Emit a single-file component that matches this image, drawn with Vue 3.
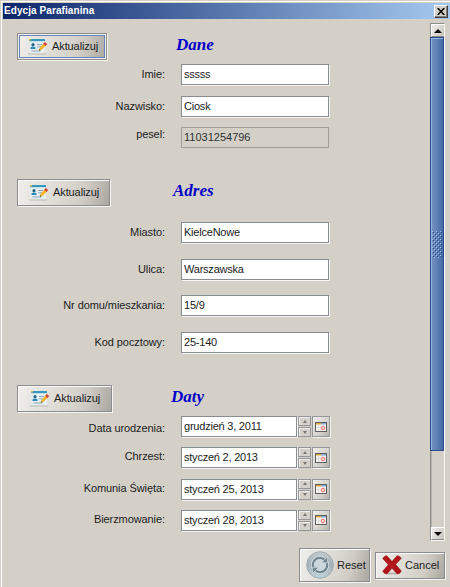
<script setup>
const sections = [
  {
    id: 'dane', title: 'Dane', focused: true,
    rows: [
      { label: 'Imie:', value: 'sssss' },
      { label: 'Nazwisko:', value: 'Ciosk' },
      { label: 'pesel:', value: '11031254796', readonly: true },
    ],
  },
  {
    id: 'adres', title: 'Adres',
    rows: [
      { label: 'Miasto:', value: 'KielceNowe' },
      { label: 'Ulica:', value: 'Warszawska' },
      { label: 'Nr domu/mieszkania:', value: '15/9' },
      { label: 'Kod pocztowy:', value: '25-140' },
    ],
  },
  {
    id: 'daty', title: 'Daty',
    rows: [
      { label: 'Data urodzenia:', value: 'grudzień 3, 2011', date: true },
      { label: 'Chrzest:', value: 'styczeń 2, 2013', date: true },
      { label: 'Komunia Święta:', value: 'styczeń 25, 2013', date: true },
      { label: 'Bierzmowanie:', value: 'styczeń 28, 2013', date: true },
    ],
  },
]
</script>

<template>
  <div class="window">
    <header class="titlebar">
      <span class="title">Edycja Parafianina</span>
      <button class="close" aria-label="Zamknij">
        <svg width="8" height="7" viewBox="0 0 8 7"><path d="M.7 0 7.3 7M7.3 0 .7 7" stroke="#000" stroke-width="1.5" /></svg>
      </button>
    </header>

    <div class="body">
      <main class="form">
        <section v-for="s in sections" :key="s.id" :class="['section', s.id]">
          <div class="head">
            <button :class="['btn', 'update', { focused: s.focused }]">
              <svg class="card" width="20" height="18" viewBox="0 0 20 18">
                <rect x="1" y="1" width="16" height="14.5" fill="#e6edf0" />
                <path d="M1 1h16v2.2H1z" fill="#3799bd" />
                <path d="M1 1h2v1.5H1z" fill="#d4bd45" />
                <path d="M0 16h18" stroke="#bcbab5" />
                <circle cx="5" cy="6.7" r="1.6" fill="#286989" />
                <path d="M2.5 11V9.6q2.5-2.2 5 0V11z" fill="#3188b1" />
                <path d="M9 6.5h5M9 8.8h4M3.5 13h9" stroke="#8daabc" />
                <path d="m10.8 12.8.8-3 4.2-4.6 2.2 2-4.3 4.6z" fill="#f4b52a" />
                <path d="m15.2 5.8 1.6-1.9 2.4 2-1.7 2z" fill="#d54136" />
                <path d="m10.8 12.8.5-1.7 1.2 1.1z" fill="#664b28" />
              </svg>
              <span>Aktualizuj</span>
            </button>
            <h2>{{ s.title }}</h2>
          </div>
          <div class="rows">
            <div v-for="r in s.rows" :key="r.label" class="row">
              <label>{{ r.label }}</label>
              <div v-if="r.date" class="datefield">
                <div class="input"><span>{{ r.value }}</span></div>
                <div class="spinner">
                  <button aria-label="Więcej"><svg width="4" height="3" viewBox="0 0 4 3"><path d="M0 3 2 0l2 3z" fill="#777" /></svg></button>
                  <button aria-label="Mniej"><svg width="4" height="3" viewBox="0 0 4 3"><path d="M0 0h4L2 3z" fill="#777" /></svg></button>
                </div>
                <button class="calendar" aria-label="Kalendarz">
                  <svg width="12" height="10" viewBox="0 0 12 10">
                    <rect x=".5" y=".5" width="11" height="9" fill="#f4f4f2" stroke="#5d5d5d" />
                    <path d="M1 1h5v1.5H1z" fill="#e1a53b" />
                    <path d="M6 1h5v1.5H6z" fill="#81a9d7" />
                    <path d="M3.5 3v6M1 5.5h4" stroke="#d5d5d3" stroke-width=".7" />
                    <circle cx="8" cy="6" r="1.8" fill="#fbdcda" stroke="#ef6f6c" />
                  </svg>
                </button>
              </div>
              <div v-else :class="['input', { readonly: r.readonly }]"><span>{{ r.value }}</span></div>
            </div>
          </div>
        </section>
      </main>

      <aside class="scrollbar">
        <button aria-label="W górę"><svg width="8" height="4" viewBox="0 0 8 4"><path d="M0 4 4 0l4 4z" /></svg></button>
        <div class="thumb">
          <svg width="10" height="27">
            <defs>
              <pattern id="grip" width="4" height="4" patternUnits="userSpaceOnUse">
                <path d="M0 0h1v1H0zM2 2h1v1H2z" fill="#a5c0e8" />
                <path d="M1 1h1v1H1zM3 3h1v1H3z" fill="#2b4e8d" />
              </pattern>
            </defs>
            <rect width="10" height="27" fill="url(#grip)" />
          </svg>
        </div>
        <div class="track"></div>
        <button aria-label="W dół"><svg width="8" height="4" viewBox="0 0 8 4"><path d="M0 0h8L4 4z" /></svg></button>
      </aside>
    </div>

    <footer class="footer">
      <button class="btn reset">
        <svg width="28" height="28" viewBox="0 0 28 28">
          <defs>
            <linearGradient id="disc" x1="0" y1="0" x2="0" y2="1">
              <stop offset="0" stop-color="#c3cbcf" />
              <stop offset=".5" stop-color="#a3b2ba" />
              <stop offset="1" stop-color="#c3d3da" />
            </linearGradient>
          </defs>
          <circle cx="14" cy="14" r="13.3" fill="url(#disc)" stroke="#93a2a9" stroke-width=".8" />
          <circle cx="14" cy="14" r="5.2" fill="#cbd7dc" />
          <path d="M7.4 16.5a7 7 0 0 1 11.4-7.6M20.6 11.5a7 7 0 0 1-11.4 7.6" fill="none" stroke="#dce5e8" stroke-width="4" />
          <path d="M7.4 16.5a7 7 0 0 1 11.4-7.6M20.6 11.5a7 7 0 0 1-11.4 7.6" fill="none" stroke="#718792" stroke-width="2.4" />
          <path d="M21.5 5.5v6.2h-6.2zM6.5 22.5v-6.2h6.2z" fill="#718792" stroke="#dce5e8" stroke-width=".6" />
        </svg>
        <span>Reset</span>
      </button>
      <button class="btn cancel">
        <svg width="20" height="20" viewBox="0 0 20 20">
          <ellipse cx="10" cy="18.5" rx="8" ry="1" fill="#b9b5b2" />
          <path d="M.7 3.5Q2 .6 4.8.7L10 6.4 15 .7Q18 .6 19.3 3.3L13.7 9.5 19.3 16Q18 19 15.2 19L10 13.2 5 19Q2 19 .7 16.2L6.3 9.7z" fill="#b01318" stroke="#8e1014" stroke-width=".5" />
          <path d="M2.3 3.3 10 12l7.8-9" fill="none" stroke="#c93335" stroke-width=".8" opacity=".6" />
        </svg>
        <span>Cancel</span>
      </button>
    </footer>
  </div>
</template>

<style>
body { margin: 0; background: #d4d0c8; overflow: hidden; }
</style>

<style scoped>
.window {
  box-sizing: border-box;
  width: 450px;
  height: 587px;
  padding: 1px 0 0 1px;
  border-top: 1px solid #d4d0c8;
  border-left: 1px solid #d4d0c8;
  box-shadow: inset 1px 1px #fff;
  background: #d4d0c8;
  color: #1c1c1c;
  font: 11px/13px "Liberation Sans", Arial, sans-serif;
  display: flex;
  flex-direction: column;
}
button { font: inherit; color: inherit; padding: 0; margin: 0; box-sizing: border-box; }
svg { display: block; flex: none; }
.titlebar {
  height: 16px;
  flex: none;
  margin: 1px 0 0 1px;
  display: flex;
  align-items: center;
  justify-content: space-between;
  background: linear-gradient(90deg, #0c266b, #a6caf0);
}
.title { color: #fff; font-weight: bold; font-size: 10px; letter-spacing: .08px; padding: 0 0 2px 1px; }
.close {
  width: 14px;
  height: 13px;
  margin-right: 2px;
  display: flex;
  align-items: center;
  justify-content: center;
  background: #d4d0c8;
  border: 1px solid;
  border-color: #fff #404040 #404040 #fff;
  box-shadow: inset -1px -1px #808080;
}
.body { display: flex; height: 522px; flex: none; margin-top: 4px; }
.form { width: 428px; flex: none; box-sizing: border-box; padding: 10px 0 0 15px; }
.section { display: flex; flex-direction: column; }
.dane { height: 146px; }
.adres { height: 206px; }
.head { display: flex; height: 27px; flex: none; align-items: center; }
.dane .head { margin-bottom: 4px; }
.adres .head { margin-bottom: 16px; }
.daty .head { margin-bottom: 4px; }
.btn {
  display: flex;
  align-items: center;
  border: 1px solid #8b8d91;
  box-shadow: 1px 1px #f5f4f0, inset 1px 1px #faf9f7;
  background: linear-gradient(105deg, #f0eeeb, #dedbd5 45%, #d0ccc5 72%, #aaa6a0);
}
.update { width: 93px; height: 27px; padding-left: 11px; gap: 4px; }
.update span { letter-spacing: -.1px; }
.focused {
  width: 90px;
  border-color: #8e8e8c;
  box-shadow: 1px 1px #f5f4f0, inset 0 0 0 1px #f0eeeb, inset 0 0 0 2px #6685bd;
  padding-left: 10px;
}
.daty .update { width: 95px; padding-left: 12px; }
h2 {
  margin: 0 0 0 69px;
  font: italic bold 17px/20px "Liberation Serif", "Times New Roman", serif;
  color: #0000c8;
}
.dane h2 { padding-bottom: 3px; }
.adres h2 { margin-left: 63px; padding-bottom: 3px; }
.daty h2 { margin-left: 59px; padding-bottom: 4px; }
.rows { display: grid; }
.dane .rows { grid-auto-rows: 31.5px; }
.adres .rows { grid-auto-rows: 36.6px; }
.daty .rows { grid-auto-rows: 31.3px; }
.row { display: grid; grid-template-columns: 148px 149px; column-gap: 16px; align-items: start; }
label { text-align: right; padding-top: 4px; white-space: nowrap; letter-spacing: -.08px; }
.dane .row:last-child label { padding-top: 1px; }
.daty label { padding-top: 3px; }
.daty .row:first-child label { padding-top: 6px; }
.input {
  box-sizing: border-box;
  width: 148px;
  height: 21px;
  padding: 3px 0 0 2px;
  background: #fff;
  border: 1px solid #898c90;
  box-shadow: 1px 1px #f6f5f1;
  white-space: nowrap;
  letter-spacing: -.22px;
}
.readonly { background: #d4d0c8; border-color: #a29e98; box-shadow: none; color: #303030; letter-spacing: 0; }
.datefield { display: flex; gap: 1px; }
.datefield .input { width: 116px; }
.spinner { display: flex; flex-direction: column; gap: 1px; width: 13px; }
.spinner button, .calendar {
  display: flex;
  align-items: center;
  justify-content: center;
  border: 1px solid #96979a;
  box-shadow: inset 1px 1px #efedea;
  background: #d5d1ca;
}
.spinner button { height: 10px; }
.calendar {
  width: 18px;
  height: 21px;
  background: linear-gradient(125deg, #f1efec, #cfccc6 70%, #b5b1ab);
  box-shadow: 1px 1px #f5f4f0;
}
.scrollbar {
  width: 15px;
  height: 518px;
  flex: none;
  box-sizing: border-box;
  border: 1px solid #8d8d8b;
  border-right-color: #f8f7f4;
  border-bottom-color: #f8f7f4;
  display: flex;
  flex-direction: column;
}
.scrollbar button {
  height: 13px;
  flex: none;
  display: flex;
  align-items: center;
  justify-content: center;
  border: 0;
  border-top: 1px solid #fff;
  border-left: 1px solid #fff;
  border-bottom: 1px solid #898989;
  background: linear-gradient(120deg, #f0eeeb, #c8c4bd);
}
.thumb {
  height: 414px;
  flex: none;
  box-sizing: border-box;
  margin-left: -1px;
  display: flex;
  align-items: center;
  justify-content: center;
  border: 1px solid #294b88;
  box-shadow: inset 1px 1px #91b4e7;
  background: linear-gradient(90deg, #7291c5, #6786b9 35%, #456aa7);
}
.track { flex: 1; box-shadow: inset 1px 0 #b7b3ac; }
.footer { display: flex; justify-content: flex-end; align-items: center; gap: 5px; padding-right: 5px; height: 40px; }
.reset { width: 71px; height: 34px; padding-left: 6px; gap: 3px; }
.cancel { width: 70px; height: 27px; padding-left: 6px; gap: 3px; }
</style>
